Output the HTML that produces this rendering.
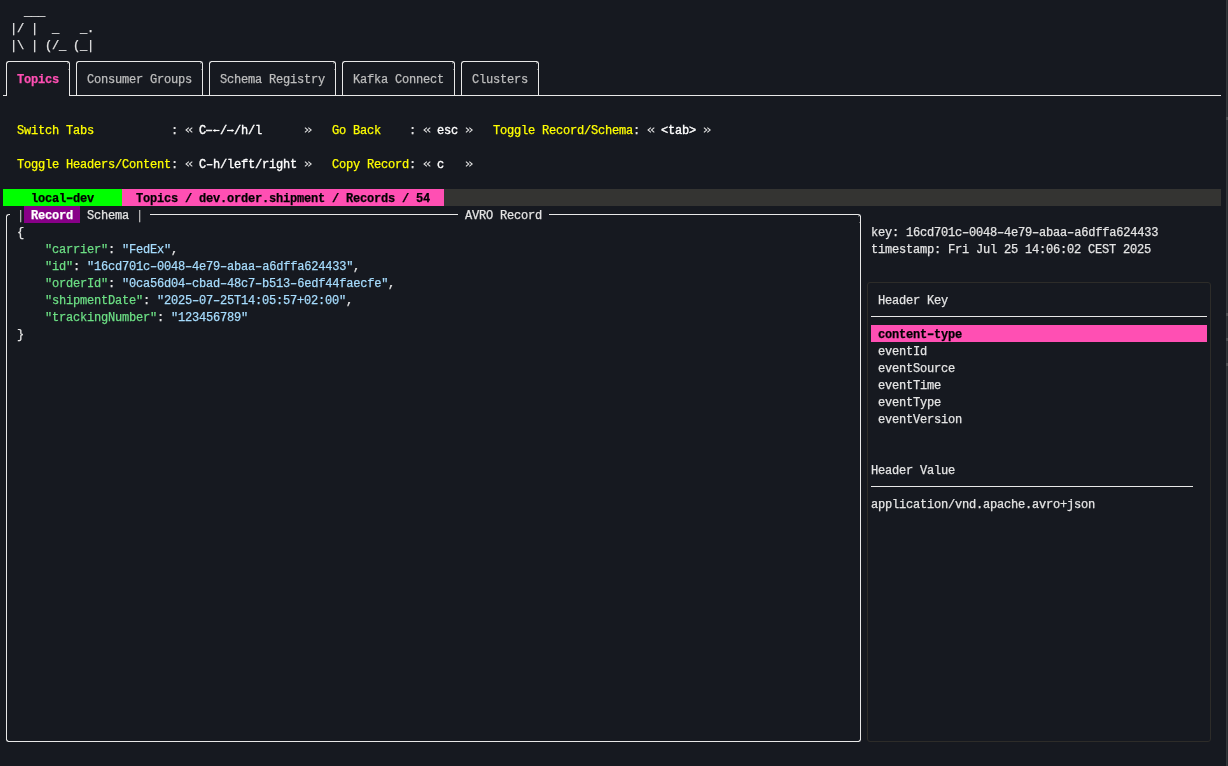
<!DOCTYPE html><html><head><meta charset="utf-8"><style>
html,body{margin:0;padding:0;}
.g{will-change:transform;}
body{width:1228px;height:766px;overflow:hidden;background:#161920;position:relative;font-family:"Liberation Mono",monospace;font-size:12.0px;letter-spacing:-0.2px;}
.r{position:absolute;}
.t{position:absolute;white-space:pre;height:17.0px;line-height:17.0px;will-change:transform;-webkit-text-stroke:0.25px currentColor;}
.b{font-weight:bold;}
.h{display:inline-block;transform:scaleX(1.55);}
.s{-webkit-text-stroke:0.35px currentColor;}
.sm{font-size:11px;margin-top:-0.2px;margin-left:1px;-webkit-text-stroke:0.35px currentColor;}
</style></head><body>
<div class="r" style="left:8.0px;top:61.0px;width:60.0px;height:1.0px;background:#e8e8e8;"></div>
<div class="r" style="left:6.0px;top:63.0px;width:1.0px;height:33.0px;background:#e8e8e8;"></div>
<div class="r" style="left:69.0px;top:63.0px;width:1.0px;height:33.0px;background:#e8e8e8;"></div>
<div class="r" style="left:6.0px;top:61.0px;width:3px;height:3px;background:transparent;border-top:1.0px solid #e8e8e8;border-left:1.0px solid #e8e8e8;border-top-left-radius:3px;box-sizing:border-box;"></div>
<div class="r" style="left:67.0px;top:61.0px;width:3px;height:3px;background:transparent;border-top:1.0px solid #e8e8e8;border-right:1.0px solid #e8e8e8;border-top-right-radius:3px;box-sizing:border-box;"></div>
<div class="r" style="left:66.5px;top:62.0px;width:1.5px;height:1.5px;background:rgba(200,200,200,0.35);"></div>
<div class="r" style="left:68.0px;top:69.0px;width:1px;height:1.2px;background:rgba(200,200,200,0.45);"></div>
<div class="r" style="left:78.0px;top:61.0px;width:123.0px;height:1.0px;background:#e8e8e8;"></div>
<div class="r" style="left:76.0px;top:63.0px;width:1.0px;height:33.0px;background:#e8e8e8;"></div>
<div class="r" style="left:202.0px;top:63.0px;width:1.0px;height:33.0px;background:#e8e8e8;"></div>
<div class="r" style="left:76.0px;top:61.0px;width:3px;height:3px;background:transparent;border-top:1.0px solid #e8e8e8;border-left:1.0px solid #e8e8e8;border-top-left-radius:3px;box-sizing:border-box;"></div>
<div class="r" style="left:200.0px;top:61.0px;width:3px;height:3px;background:transparent;border-top:1.0px solid #e8e8e8;border-right:1.0px solid #e8e8e8;border-top-right-radius:3px;box-sizing:border-box;"></div>
<div class="r" style="left:199.5px;top:62.0px;width:1.5px;height:1.5px;background:rgba(200,200,200,0.35);"></div>
<div class="r" style="left:201.0px;top:69.0px;width:1px;height:1.2px;background:rgba(200,200,200,0.45);"></div>
<div class="r" style="left:211.0px;top:61.0px;width:123.0px;height:1.0px;background:#e8e8e8;"></div>
<div class="r" style="left:209.0px;top:63.0px;width:1.0px;height:33.0px;background:#e8e8e8;"></div>
<div class="r" style="left:335.0px;top:63.0px;width:1.0px;height:33.0px;background:#e8e8e8;"></div>
<div class="r" style="left:209.0px;top:61.0px;width:3px;height:3px;background:transparent;border-top:1.0px solid #e8e8e8;border-left:1.0px solid #e8e8e8;border-top-left-radius:3px;box-sizing:border-box;"></div>
<div class="r" style="left:333.0px;top:61.0px;width:3px;height:3px;background:transparent;border-top:1.0px solid #e8e8e8;border-right:1.0px solid #e8e8e8;border-top-right-radius:3px;box-sizing:border-box;"></div>
<div class="r" style="left:332.5px;top:62.0px;width:1.5px;height:1.5px;background:rgba(200,200,200,0.35);"></div>
<div class="r" style="left:334.0px;top:69.0px;width:1px;height:1.2px;background:rgba(200,200,200,0.45);"></div>
<div class="r" style="left:344.0px;top:61.0px;width:109.0px;height:1.0px;background:#e8e8e8;"></div>
<div class="r" style="left:342.0px;top:63.0px;width:1.0px;height:33.0px;background:#e8e8e8;"></div>
<div class="r" style="left:454.0px;top:63.0px;width:1.0px;height:33.0px;background:#e8e8e8;"></div>
<div class="r" style="left:342.0px;top:61.0px;width:3px;height:3px;background:transparent;border-top:1.0px solid #e8e8e8;border-left:1.0px solid #e8e8e8;border-top-left-radius:3px;box-sizing:border-box;"></div>
<div class="r" style="left:452.0px;top:61.0px;width:3px;height:3px;background:transparent;border-top:1.0px solid #e8e8e8;border-right:1.0px solid #e8e8e8;border-top-right-radius:3px;box-sizing:border-box;"></div>
<div class="r" style="left:451.5px;top:62.0px;width:1.5px;height:1.5px;background:rgba(200,200,200,0.35);"></div>
<div class="r" style="left:453.0px;top:69.0px;width:1px;height:1.2px;background:rgba(200,200,200,0.45);"></div>
<div class="r" style="left:463.0px;top:61.0px;width:74.0px;height:1.0px;background:#e8e8e8;"></div>
<div class="r" style="left:461.0px;top:63.0px;width:1.0px;height:33.0px;background:#e8e8e8;"></div>
<div class="r" style="left:538.0px;top:63.0px;width:1.0px;height:33.0px;background:#e8e8e8;"></div>
<div class="r" style="left:461.0px;top:61.0px;width:3px;height:3px;background:transparent;border-top:1.0px solid #e8e8e8;border-left:1.0px solid #e8e8e8;border-top-left-radius:3px;box-sizing:border-box;"></div>
<div class="r" style="left:536.0px;top:61.0px;width:3px;height:3px;background:transparent;border-top:1.0px solid #e8e8e8;border-right:1.0px solid #e8e8e8;border-top-right-radius:3px;box-sizing:border-box;"></div>
<div class="r" style="left:535.5px;top:62.0px;width:1.5px;height:1.5px;background:rgba(200,200,200,0.35);"></div>
<div class="r" style="left:537.0px;top:69.0px;width:1px;height:1.2px;background:rgba(200,200,200,0.45);"></div>
<div class="r" style="left:3.0px;top:95.0px;width:3.5px;height:1.0px;background:#e8e8e8;"></div>
<div class="r" style="left:69.5px;top:95.0px;width:1151.5px;height:1.0px;background:#e8e8e8;"></div>
<div class="r" style="left:3.0px;top:189.0px;width:119.0px;height:17.0px;background:#00ff00;"></div>
<div class="r" style="left:122.0px;top:189.0px;width:322.0px;height:17.0px;background:#ff4fb3;"></div>
<div class="r" style="left:444.0px;top:189.0px;width:777.0px;height:17.0px;background:#343432;"></div>
<div class="r" style="left:6.0px;top:216.0px;width:1.0px;height:524.0px;background:#e8e8e8;"></div>
<div class="r" style="left:860.0px;top:216.0px;width:1.0px;height:524.0px;background:#e8e8e8;"></div>
<div class="r" style="left:8.0px;top:741.0px;width:851.0px;height:1.0px;background:#e8e8e8;"></div>
<div class="r" style="left:6.0px;top:214.0px;width:3.5px;height:3px;background:transparent;border-top:1.0px solid #e8e8e8;border-left:1.0px solid #e8e8e8;border-top-left-radius:3px;box-sizing:border-box;"></div>
<div class="r" style="left:858.0px;top:214.0px;width:3px;height:3px;background:transparent;border-top:1.0px solid #e8e8e8;border-right:1.0px solid #e8e8e8;border-top-right-radius:3px;box-sizing:border-box;"></div>
<div class="r" style="left:6.0px;top:739.0px;width:3px;height:3px;background:transparent;border-bottom:1.0px solid #e8e8e8;border-left:1.0px solid #e8e8e8;border-bottom-left-radius:3px;box-sizing:border-box;"></div>
<div class="r" style="left:858.0px;top:739.0px;width:3px;height:3px;background:transparent;border-bottom:1.0px solid #e8e8e8;border-right:1.0px solid #e8e8e8;border-bottom-right-radius:3px;box-sizing:border-box;"></div>
<div class="r" style="left:857.5px;top:215.0px;width:1.5px;height:1.5px;background:rgba(200,200,200,0.35);"></div>
<div class="r" style="left:859.0px;top:222.0px;width:1px;height:1.2px;background:rgba(200,200,200,0.45);"></div>
<div class="r" style="left:150.0px;top:214.0px;width:308.0px;height:1.0px;background:#e8e8e8;"></div>
<div class="r" style="left:549.0px;top:214.0px;width:309.0px;height:1.0px;background:#e8e8e8;"></div>
<div class="r" style="left:24.0px;top:206.0px;width:56.0px;height:17.0px;background:#880088;"></div>
<div class="r" style="left:867.0px;top:282.0px;width:344.0px;height:460.0px;background:transparent;border:1px solid #2d2c29;border-radius:3px;box-sizing:border-box;"></div>
<div class="r" style="left:871.0px;top:316.0px;width:336.0px;height:1.0px;background:#e8e8e8;"></div>
<div class="r" style="left:871.0px;top:325.0px;width:336.0px;height:17.0px;background:#ff4fb3;"></div>
<div class="r" style="left:871.0px;top:486.0px;width:322.0px;height:1.0px;background:#e8e8e8;"></div>
<div class="r" style="left:1226px;top:0px;width:1px;height:766px;background:#33373b;"></div>
<div class="r" style="left:1227px;top:0px;width:1px;height:766px;background:#2a2e32;"></div>
<div class="r" style="left:1226px;top:117.0px;width:2px;height:3px;background:#4a4d50;"></div>
<div class="r" style="left:1226px;top:313.0px;width:2px;height:3px;background:#4a4d50;"></div>
<div class="r" style="left:1226px;top:338.1px;width:2px;height:3px;background:#4a4d50;"></div>
<div class="r" style="left:1226px;top:363.2px;width:2px;height:3px;background:#4a4d50;"></div>
<div class="t" style="left:24.0px;top:4.0px;color:#e4e4e4">___</div>
<div class="t" style="left:10.0px;top:21.0px;color:#e4e4e4">|/ |  _   _.</div>
<div class="t" style="left:10.0px;top:38.0px;color:#e4e4e4">|\ | (/_ (_|</div>
<div class="t b" style="left:17.0px;top:72.0px;color:#ff4fb3">Topics</div>
<div class="t" style="left:87.0px;top:72.0px;color:#bdbdbd">Consumer Groups</div>
<div class="t" style="left:220.0px;top:72.0px;color:#bdbdbd">Schema Registry</div>
<div class="t" style="left:353.0px;top:72.0px;color:#bdbdbd">Kafka Connect</div>
<div class="t" style="left:472.0px;top:72.0px;color:#bdbdbd">Clusters</div>
<div class="t" style="left:17.0px;top:123.0px;color:#ffff00">Switch Tabs</div>
<div class="t" style="left:171.0px;top:123.0px;color:#e4e4e4">:</div>
<div class="t s" style="left:199.0px;top:123.0px;color:#ffffff">C  / /h/l</div>
<div class="t" style="left:17.0px;top:157.0px;color:#ffff00">Toggle Headers/Content</div>
<div class="t" style="left:171.0px;top:157.0px;color:#e4e4e4">:</div>
<div class="t s" style="left:199.0px;top:157.0px;color:#ffffff">C<span class="h">-</span>h/left/right</div>
<div class="t" style="left:332.0px;top:123.0px;color:#ffff00">Go Back</div>
<div class="t" style="left:409.0px;top:123.0px;color:#e4e4e4">:</div>
<div class="t s" style="left:437.0px;top:123.0px;color:#ffffff">esc</div>
<div class="t" style="left:332.0px;top:157.0px;color:#ffff00">Copy Record</div>
<div class="t" style="left:409.0px;top:157.0px;color:#e4e4e4">:</div>
<div class="t s" style="left:437.0px;top:157.0px;color:#ffffff">c</div>
<div class="t" style="left:493.0px;top:123.0px;color:#ffff00">Toggle Record/Schema</div>
<div class="t" style="left:633.0px;top:123.0px;color:#e4e4e4">:</div>
<div class="t s" style="left:661.0px;top:123.0px;color:#ffffff">&lt;tab&gt;</div>
<div class="t b" style="left:31.0px;top:191.0px;color:#000000">local<span class="h">-</span>dev</div>
<div class="t b" style="left:136.0px;top:191.0px;color:#000000">Topics / dev.order.shipment / Records / 54</div>
<div class="t" style="left:17.0px;top:208.0px;color:#bdbdbd">|</div>
<div class="t b" style="left:31.0px;top:208.0px;color:#ffffff">Record</div>
<div class="t" style="left:87.0px;top:208.0px;color:#e4e4e4">Schema</div>
<div class="t" style="left:136.0px;top:208.0px;color:#bdbdbd">|</div>
<div class="t" style="left:465.0px;top:208.0px;color:#e4e4e4">AVRO Record</div>
<div class="t" style="left:17.0px;top:225.0px;color:#e4e4e4">{</div>
<div class="t" style="left:45.0px;top:242.0px;color:#6cdf84">"carrier"</div>
<div class="t" style="left:108.0px;top:242.0px;color:#e4e4e4">:</div>
<div class="t" style="left:122.0px;top:242.0px;color:#a6dcfd">"FedEx"</div>
<div class="t" style="left:171.0px;top:242.0px;color:#e4e4e4">,</div>
<div class="t" style="left:45.0px;top:259.0px;color:#6cdf84">"id"</div>
<div class="t" style="left:73.0px;top:259.0px;color:#e4e4e4">:</div>
<div class="t" style="left:87.0px;top:259.0px;color:#a6dcfd">"16cd701c<span class="h">-</span>0048<span class="h">-</span>4e79<span class="h">-</span>abaa<span class="h">-</span>a6dffa624433"</div>
<div class="t" style="left:353.0px;top:259.0px;color:#e4e4e4">,</div>
<div class="t" style="left:45.0px;top:276.0px;color:#6cdf84">"orderId"</div>
<div class="t" style="left:108.0px;top:276.0px;color:#e4e4e4">:</div>
<div class="t" style="left:122.0px;top:276.0px;color:#a6dcfd">"0ca56d04<span class="h">-</span>cbad<span class="h">-</span>48c7<span class="h">-</span>b513<span class="h">-</span>6edf44faecfe"</div>
<div class="t" style="left:388.0px;top:276.0px;color:#e4e4e4">,</div>
<div class="t" style="left:45.0px;top:293.0px;color:#6cdf84">"shipmentDate"</div>
<div class="t" style="left:143.0px;top:293.0px;color:#e4e4e4">:</div>
<div class="t" style="left:157.0px;top:293.0px;color:#a6dcfd">"2025<span class="h">-</span>07<span class="h">-</span>25T14:05:57+02:00"</div>
<div class="t" style="left:346.0px;top:293.0px;color:#e4e4e4">,</div>
<div class="t" style="left:45.0px;top:310.0px;color:#6cdf84">"trackingNumber"</div>
<div class="t" style="left:157.0px;top:310.0px;color:#e4e4e4">:</div>
<div class="t" style="left:171.0px;top:310.0px;color:#a6dcfd">"123456789"</div>
<div class="t" style="left:17.0px;top:327.0px;color:#e4e4e4">}</div>
<div class="t" style="left:871.0px;top:225.0px;color:#e4e4e4">key: 16cd701c<span class="h">-</span>0048<span class="h">-</span>4e79<span class="h">-</span>abaa<span class="h">-</span>a6dffa624433</div>
<div class="t" style="left:871.0px;top:242.0px;color:#e4e4e4">timestamp: Fri Jul 25 14:06:02 CEST 2025</div>
<div class="t" style="left:878.0px;top:293.0px;color:#e4e4e4">Header Key</div>
<div class="t b" style="left:878.0px;top:327.0px;color:#000000">content<span class="h">-</span>type</div>
<div class="t" style="left:878.0px;top:344.0px;color:#e4e4e4">eventId</div>
<div class="t" style="left:878.0px;top:361.0px;color:#e4e4e4">eventSource</div>
<div class="t" style="left:878.0px;top:378.0px;color:#e4e4e4">eventTime</div>
<div class="t" style="left:878.0px;top:395.0px;color:#e4e4e4">eventType</div>
<div class="t" style="left:878.0px;top:412.0px;color:#e4e4e4">eventVersion</div>
<div class="t" style="left:871.0px;top:463.0px;color:#e4e4e4">Header Value</div>
<div class="t" style="left:871.0px;top:497.0px;color:#e4e4e4">application/vnd.apache.avro+json</div>
<svg style="position:absolute;left:185.0px;top:127.1px" width="8" height="6" viewBox="0 0 8 6"><path d="M3.9 0.55L1.0 3L3.9 5.45M7.3 0.55L4.4 3L7.3 5.45" fill="none" stroke="#e0e0e0" stroke-width="1.05"/></svg>
<svg style="position:absolute;left:304.0px;top:127.1px" width="8" height="6" viewBox="0 0 8 6"><path d="M0.9 0.55L3.8 3L0.9 5.45M4.3 0.55L7.2 3L4.3 5.45" fill="none" stroke="#e0e0e0" stroke-width="1.05"/></svg>
<svg style="position:absolute;left:206.0px;top:126.80000000000001px" width="14" height="7" viewBox="0 0 14 7"><path d="M0 3.5H6.2" stroke="#f0f0f0" stroke-width="1.6"/><path d="M7.5 3.5H13.5" stroke="#fff" stroke-width="1.2"/><path d="M6.8 3.5L9.3 1.9V5.1Z" fill="#fff"/></svg>
<svg style="position:absolute;left:227.0px;top:126.80000000000001px" width="7" height="7" viewBox="0 0 7 7"><path d="M0 3.5H6.5" stroke="#fff" stroke-width="1.3"/><path d="M7 3.5L4.7 2V5Z" fill="#fff"/></svg>
<svg style="position:absolute;left:185.0px;top:161.1px" width="8" height="6" viewBox="0 0 8 6"><path d="M3.9 0.55L1.0 3L3.9 5.45M7.3 0.55L4.4 3L7.3 5.45" fill="none" stroke="#e0e0e0" stroke-width="1.05"/></svg>
<svg style="position:absolute;left:304.0px;top:161.1px" width="8" height="6" viewBox="0 0 8 6"><path d="M0.9 0.55L3.8 3L0.9 5.45M4.3 0.55L7.2 3L4.3 5.45" fill="none" stroke="#e0e0e0" stroke-width="1.05"/></svg>
<svg style="position:absolute;left:423.0px;top:127.1px" width="8" height="6" viewBox="0 0 8 6"><path d="M3.9 0.55L1.0 3L3.9 5.45M7.3 0.55L4.4 3L7.3 5.45" fill="none" stroke="#e0e0e0" stroke-width="1.05"/></svg>
<svg style="position:absolute;left:465.0px;top:127.1px" width="8" height="6" viewBox="0 0 8 6"><path d="M0.9 0.55L3.8 3L0.9 5.45M4.3 0.55L7.2 3L4.3 5.45" fill="none" stroke="#e0e0e0" stroke-width="1.05"/></svg>
<svg style="position:absolute;left:423.0px;top:161.1px" width="8" height="6" viewBox="0 0 8 6"><path d="M3.9 0.55L1.0 3L3.9 5.45M7.3 0.55L4.4 3L7.3 5.45" fill="none" stroke="#e0e0e0" stroke-width="1.05"/></svg>
<svg style="position:absolute;left:465.0px;top:161.1px" width="8" height="6" viewBox="0 0 8 6"><path d="M0.9 0.55L3.8 3L0.9 5.45M4.3 0.55L7.2 3L4.3 5.45" fill="none" stroke="#e0e0e0" stroke-width="1.05"/></svg>
<svg style="position:absolute;left:647.0px;top:127.1px" width="8" height="6" viewBox="0 0 8 6"><path d="M3.9 0.55L1.0 3L3.9 5.45M7.3 0.55L4.4 3L7.3 5.45" fill="none" stroke="#e0e0e0" stroke-width="1.05"/></svg>
<svg style="position:absolute;left:703.0px;top:127.1px" width="8" height="6" viewBox="0 0 8 6"><path d="M0.9 0.55L3.8 3L0.9 5.45M4.3 0.55L7.2 3L4.3 5.45" fill="none" stroke="#e0e0e0" stroke-width="1.05"/></svg>
</body></html>
